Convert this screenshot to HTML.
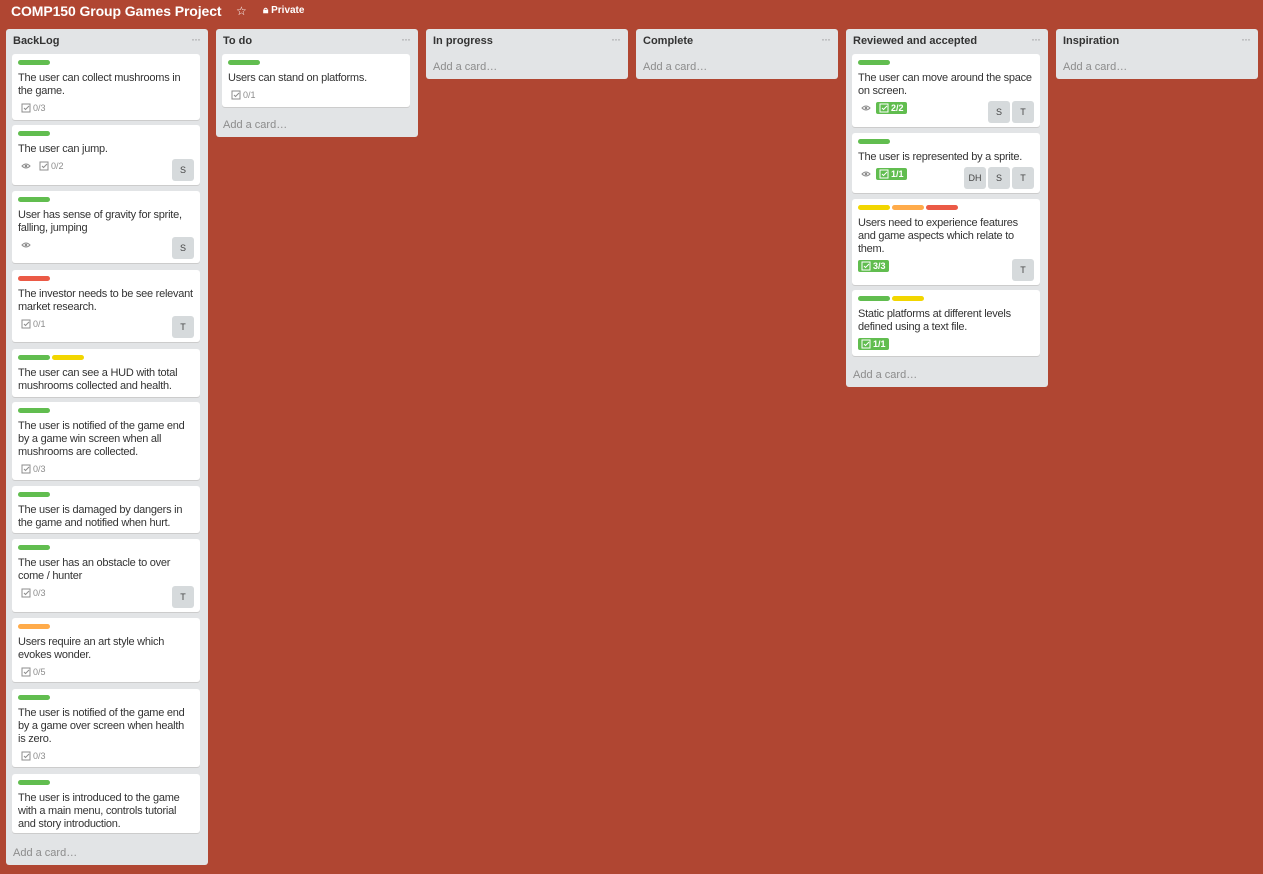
<!DOCTYPE html>
<html><head><meta charset="utf-8"><style>
*{box-sizing:border-box;margin:0;padding:0}
body{width:1263px;height:874px;background:#b04632;font-family:"Liberation Sans",sans-serif;position:relative;overflow:hidden;color:#333}
.title{position:absolute;left:11px;top:3px;font-size:14px;font-weight:bold;color:#fff;letter-spacing:-0.1px}
.star{position:absolute;left:236px;top:4px;color:#fff;font-size:12px}
.priv{position:absolute;left:263px;top:5px;color:#fff;font-size:10px;font-weight:bold}
.list{position:absolute;top:29px;width:202px;background:#e2e4e6;border-radius:3px}
.lh{position:absolute;left:7px;top:6px;font-size:11px;font-weight:bold;color:#333}
.dots{position:absolute;right:8px;top:3px;font-size:12px;color:#999;letter-spacing:-1px}
.add{position:absolute;left:7px;font-size:11px;color:#8c8c8c}
.card{position:absolute;left:6px;width:188px;background:#fff;border-radius:3px;box-shadow:0 1px 0 #ccc;padding:6px 6px 0 6px}
.labs{height:5px;margin-bottom:7px;display:flex;gap:2px}
.l{width:32px;height:5px;border-radius:3px}
.g{background:#61bd4f}.y{background:#f2d600}.o{background:#ffab4a}.r{background:#eb5a46}
.t{font-size:11px;line-height:13px;color:#333;letter-spacing:-0.25px}
.b{height:16px;margin-top:2px;display:flex;align-items:center;font-size:9px;color:#8c8c8c;padding-left:3px;gap:8px}
.b span{display:flex;align-items:center;gap:2px}
.ok{background:#61bd4f;color:#fff;font-weight:bold;padding:1px 3px;border-radius:2px;margin-left:-3px}
.av{position:absolute;bottom:4px;display:flex;gap:2px;right:6px}
.av div{width:22px;height:22px;background:#d6dadc;border-radius:3px;font-size:9px;color:#444;display:flex;align-items:center;justify-content:center}
</style></head><body>
<div class="title">COMP150 Group Games Project</div>
<div class="star">☆</div>
<div class="priv">🔒︎ Private</div>

<svg width="0" height="0" style="position:absolute"><defs><symbol id="ck" viewBox="0 0 10 10"><rect x="1" y="1" width="8" height="8" fill="none" stroke="currentColor" stroke-width="1"/><path d="M3 5l1.5 1.5L8 3" fill="none" stroke="currentColor" stroke-width="1"/></symbol><symbol id="ey" viewBox="0 0 10 10"><path d="M1 5q4-4 8 0q-4 4-8 0z" fill="none" stroke="currentColor"/><circle cx="5" cy="5" r="1.3" fill="currentColor"/></symbol></defs></svg>

<div class="list" style="left:6px;height:836px">
<div class="lh">BackLog</div><div class="dots">···</div>
<div class="card" style="top:25px;height:66px"><div class="labs"><div class="l g"></div></div><div class="t">The user can collect mushrooms in the game.</div><div class="b"><span><svg width="10" height="10"><use href="#ck"/></svg>0/3</span></div></div>
<div class="card" style="top:96px;height:60px"><div class="labs"><div class="l g"></div></div><div class="t">The user can jump.</div><div class="b"><span><svg width="10" height="10"><use href="#ey"/></svg></span><span><svg width="10" height="10"><use href="#ck"/></svg>0/2</span></div><div class="av"><div>S</div></div></div>
<div class="card" style="top:162px;height:72px"><div class="labs"><div class="l g"></div></div><div class="t">User has sense of gravity for sprite, falling, jumping</div><div class="b"><span><svg width="10" height="10"><use href="#ey"/></svg></span></div><div class="av"><div>S</div></div></div>
<div class="card" style="top:241px;height:72px"><div class="labs"><div class="l r"></div></div><div class="t">The investor needs to be see relevant market research.</div><div class="b"><span><svg width="10" height="10"><use href="#ck"/></svg>0/1</span></div><div class="av"><div>T</div></div></div>
<div class="card" style="top:320px;height:48px"><div class="labs"><div class="l g"></div><div class="l y"></div></div><div class="t">The user can see a HUD with total mushrooms collected and health.</div></div>
<div class="card" style="top:373px;height:78px"><div class="labs"><div class="l g"></div></div><div class="t">The user is notified of the game end by a game win screen when all mushrooms are collected.</div><div class="b"><span><svg width="10" height="10"><use href="#ck"/></svg>0/3</span></div></div>
<div class="card" style="top:457px;height:47px"><div class="labs"><div class="l g"></div></div><div class="t">The user is damaged by dangers in the game and notified when hurt.</div></div>
<div class="card" style="top:510px;height:73px"><div class="labs"><div class="l g"></div></div><div class="t">The user has an obstacle to over come / hunter</div><div class="b"><span><svg width="10" height="10"><use href="#ck"/></svg>0/3</span></div><div class="av"><div>T</div></div></div>
<div class="card" style="top:589px;height:64px"><div class="labs"><div class="l o"></div></div><div class="t">Users require an art style which evokes wonder.</div><div class="b"><span><svg width="10" height="10"><use href="#ck"/></svg>0/5</span></div></div>
<div class="card" style="top:660px;height:78px"><div class="labs"><div class="l g"></div></div><div class="t">The user is notified of the game end by a game over screen when health is zero.</div><div class="b"><span><svg width="10" height="10"><use href="#ck"/></svg>0/3</span></div></div>
<div class="card" style="top:745px;height:59px"><div class="labs"><div class="l g"></div></div><div class="t">The user is introduced to the game with a main menu, controls tutorial and story introduction.</div></div>
<div class="add" style="top:818px">Add a card…</div>
</div>

<div class="list" style="left:216px;height:108px">
<div class="lh">To do</div><div class="dots">···</div>
<div class="card" style="top:25px;height:53px"><div class="labs"><div class="l g"></div></div><div class="t">Users can stand on platforms.</div><div class="b"><span><svg width="10" height="10"><use href="#ck"/></svg>0/1</span></div></div>
<div class="add" style="top:90px">Add a card…</div>
</div>

<div class="list" style="left:426px;height:50px"><div class="lh">In progress</div><div class="dots">···</div><div class="add" style="top:32px">Add a card…</div></div>
<div class="list" style="left:636px;height:50px"><div class="lh">Complete</div><div class="dots">···</div><div class="add" style="top:32px">Add a card…</div></div>

<div class="list" style="left:846px;height:358px">
<div class="lh">Reviewed and accepted</div><div class="dots">···</div>
<div class="card" style="top:25px;height:73px"><div class="labs"><div class="l g"></div></div><div class="t">The user can move around the space on screen.</div><div class="b"><span><svg width="10" height="10"><use href="#ey"/></svg></span><span class="ok"><svg width="10" height="10"><use href="#ck"/></svg>2/2</span></div><div class="av"><div>S</div><div>T</div></div></div>
<div class="card" style="top:104px;height:60px"><div class="labs"><div class="l g"></div></div><div class="t">The user is represented by a sprite.</div><div class="b"><span><svg width="10" height="10"><use href="#ey"/></svg></span><span class="ok"><svg width="10" height="10"><use href="#ck"/></svg>1/1</span></div><div class="av"><div>DH</div><div>S</div><div>T</div></div></div>
<div class="card" style="top:170px;height:86px"><div class="labs"><div class="l y"></div><div class="l o"></div><div class="l r"></div></div><div class="t">Users need to experience features and game aspects which relate to them.</div><div class="b"><span class="ok"><svg width="10" height="10"><use href="#ck"/></svg>3/3</span></div><div class="av"><div>T</div></div></div>
<div class="card" style="top:261px;height:66px"><div class="labs"><div class="l g"></div><div class="l y"></div></div><div class="t">Static platforms at different levels defined using a text file.</div><div class="b"><span class="ok"><svg width="10" height="10"><use href="#ck"/></svg>1/1</span></div></div>
<div class="add" style="top:340px">Add a card…</div>
</div>

<div class="list" style="left:1056px;height:50px"><div class="lh">Inspiration</div><div class="dots">···</div><div class="add" style="top:32px">Add a card…</div></div>
</body></html>
